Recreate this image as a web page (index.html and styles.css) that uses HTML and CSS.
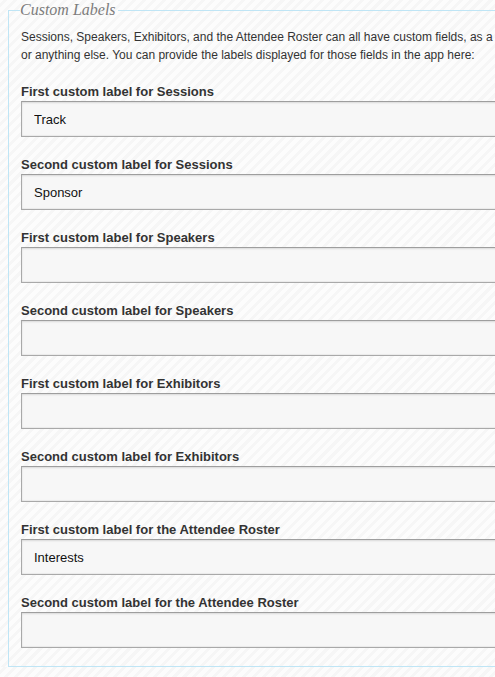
FILE: index.html
```html
<!DOCTYPE html>
<html>
<head>
<meta charset="utf-8">
<link rel="stylesheet" href="styles.css">
</head>
<body>
<div class="page">
  <fieldset class="labels">
    <legend class="legend">Custom Labels</legend>
    <p class="intro">Sessions, Speakers, Exhibitors, and the Attendee Roster can all have custom fields, as a<br>or anything else. You can provide the labels displayed for those fields in the app here:</p>
    <div class="field">
      <label class="label">First custom label for Sessions</label>
      <input class="input" type="text" value="Track">
    </div>
    <div class="field">
      <label class="label">Second custom label for Sessions</label>
      <input class="input" type="text" value="Sponsor">
    </div>
    <div class="field">
      <label class="label">First custom label for Speakers</label>
      <input class="input" type="text" value="">
    </div>
    <div class="field">
      <label class="label">Second custom label for Speakers</label>
      <input class="input" type="text" value="">
    </div>
    <div class="field">
      <label class="label">First custom label for Exhibitors</label>
      <input class="input" type="text" value="">
    </div>
    <div class="field">
      <label class="label">Second custom label for Exhibitors</label>
      <input class="input" type="text" value="">
    </div>
    <div class="field">
      <label class="label">First custom label for the Attendee Roster</label>
      <input class="input" type="text" value="Interests">
    </div>
    <div class="field">
      <label class="label">Second custom label for the Attendee Roster</label>
      <input class="input" type="text" value="">
    </div>
  </fieldset>
</div>
</body>
</html>
```
FILE: styles.css
```css
html, body {
  margin: 0;
  padding: 0;
  overflow: hidden;
}
body {
  background-color: #fbfbfb;
  background-image: repeating-linear-gradient(-45deg, #fcfcfc 0px, #fcfcfc 4px, #f6f6f6 4px, #f6f6f6 7px);
  font-family: "Liberation Sans", Arial, sans-serif;
  color: #333;
}
.page {
  width: 640px;
  padding: 1px 0 0 8px;
}
.labels {
  margin: 0;
  border: 1px solid #bfe5f5;
  padding: 0 0 18px 12px;
  min-width: 0;
}
.legend {
  font-family: "Liberation Serif", "DejaVu Serif", serif;
  font-style: italic;
  font-size: 16px;
  line-height: 18px;
  color: #7d7d7d;
  padding: 0 2px 0 0;
  margin-left: -1px;
}
.intro {
  margin: 9px 0 0 0;
  font-size: 12px;
  line-height: 18px;
  white-space: nowrap;
  color: #333;
}
.field {
  display: flex;
  flex-direction: column;
  margin-top: 19px;
}
.label {
  font-weight: bold;
  font-size: 13px;
  line-height: 18px;
  color: #333;
}
.input {
  box-sizing: border-box;
  height: 36px;
  width: 100%;
  margin: 0;
  border: 1px solid #a9a9a9;
  border-top-color: #9e9e9e;
  background: #f7f7f7;
  box-shadow: inset 0 1px 2px rgba(0,0,0,0.12), inset 0 -1px 1px rgba(0,0,0,0.05);
  padding: 0 12px;
  font-family: "Liberation Sans", Arial, sans-serif;
  font-size: 13px;
  color: #111;
  outline: none;
}
```
